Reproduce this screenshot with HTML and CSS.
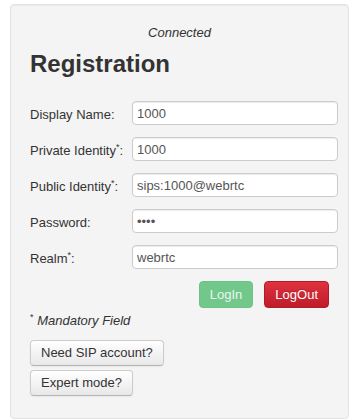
FILE: index.html
```html
<!DOCTYPE html>
<html lang="en">
<head>
  <meta charset="UTF-8">
  <meta name="viewport" content="width=device-width, initial-scale=1.0">
  <title>Registration</title>
  <link rel="stylesheet" href="styles.css">
</head>
<body>
  <div class="well">
    <div class="status">Connected</div>
    <h2>Registration</h2>

    <div class="form-grid">
      <label for="display-name">Display Name:</label>
      <input id="display-name" type="text" value="1000">

      <label for="private-identity">Private Identity<sup>*</sup>:</label>
      <input id="private-identity" type="text" value="1000">

      <label for="public-identity">Public Identity<sup>*</sup>:</label>
      <input id="public-identity" type="text" value="sips:1000@webrtc">

      <label for="password">Password:</label>
      <input id="password" type="password" value="1000">

      <label for="realm">Realm<sup>*</sup>:</label>
      <input id="realm" type="text" value="webrtc">
    </div>

    <div class="actions">
      <button class="btn btn-success" disabled>LogIn</button>
      <button class="btn btn-danger">LogOut</button>
    </div>

    <p class="mandatory"><sup>*</sup> <i>Mandatory Field</i></p>

    <div class="extra">
      <button class="btn btn-default">Need SIP account?</button>
      <button class="btn btn-default">Expert mode?</button>
    </div>
  </div>
</body>
</html>
```

FILE: styles.css
```css
body {
  margin: 0;
  padding: 4px 14px 0 10px;
  background: #ffffff;
  font-family: "Liberation Sans", Arial, sans-serif;
  font-size: 13px;
  line-height: 18px;
  color: #333333;
}

.well {
  min-height: 375px;
  padding: 19px;
  background-color: #f4f4f4;
  border: 1px solid #e3e3e3;
  border-radius: 4px;
  box-shadow: inset 0 1px 1px rgba(0,0,0,0.05);
}

.status {
  text-align: center;
  font-style: italic;
}

h2 {
  margin: 7px 0 22px;
  font-size: 24px;
  line-height: 30px;
  font-weight: bold;
  color: #333333;
}

.form-grid {
  display: grid;
  grid-template-columns: 102px 206px;
  row-gap: 12px;
}

.form-grid label {
  padding-top: 5px;
  white-space: nowrap;
}

sup {
  font-size: 9px;
  line-height: 0;
  vertical-align: 5px;
}

.form-grid input {
  box-sizing: border-box;
  width: 206px;
  height: 24px;
  margin: 0;
  padding: 2px 4px;
  font-family: inherit;
  font-size: 13px;
  color: #555555;
  background: #ffffff;
  border: 1px solid #cccccc;
  border-radius: 4px;
  box-shadow: inset 0 1px 1px rgba(0,0,0,0.075);
  outline: none;
}

.actions {
  display: flex;
  justify-content: flex-end;
  gap: 11px;
  margin-top: 12px;
}

.btn {
  margin: 0;
  padding: 4px 10px;
  font-family: inherit;
  font-size: 13px;
  line-height: 17px;
  border: 1px solid #cccccc;
  border-radius: 4px;
  cursor: pointer;
}

.btn-success {
  color: #eaf6ee;
  background: #72c88a;
  border-color: #6cc285;
  cursor: default;
}

.btn-danger {
  color: #ffffff;
  background: linear-gradient(#e0323f, #bf1b29);
  border-color: #b01c28;
  text-shadow: 0 -1px 0 rgba(0,0,0,0.2);
}

.btn-default {
  padding: 3px 10px;
  line-height: 18px;
  color: #333333;
  background: linear-gradient(#ffffff, #e8e8e8);
  border-color: #cccccc #cccccc #b3b3b3;
  box-shadow: inset 0 1px 0 rgba(255,255,255,0.2), 0 1px 2px rgba(0,0,0,0.05);
}

.mandatory {
  margin: 4px 0 10px;
}

.mandatory sup {
  vertical-align: 5px;
}

.extra {
  display: flex;
  flex-direction: column;
  align-items: flex-start;
  gap: 4px;
}
```
